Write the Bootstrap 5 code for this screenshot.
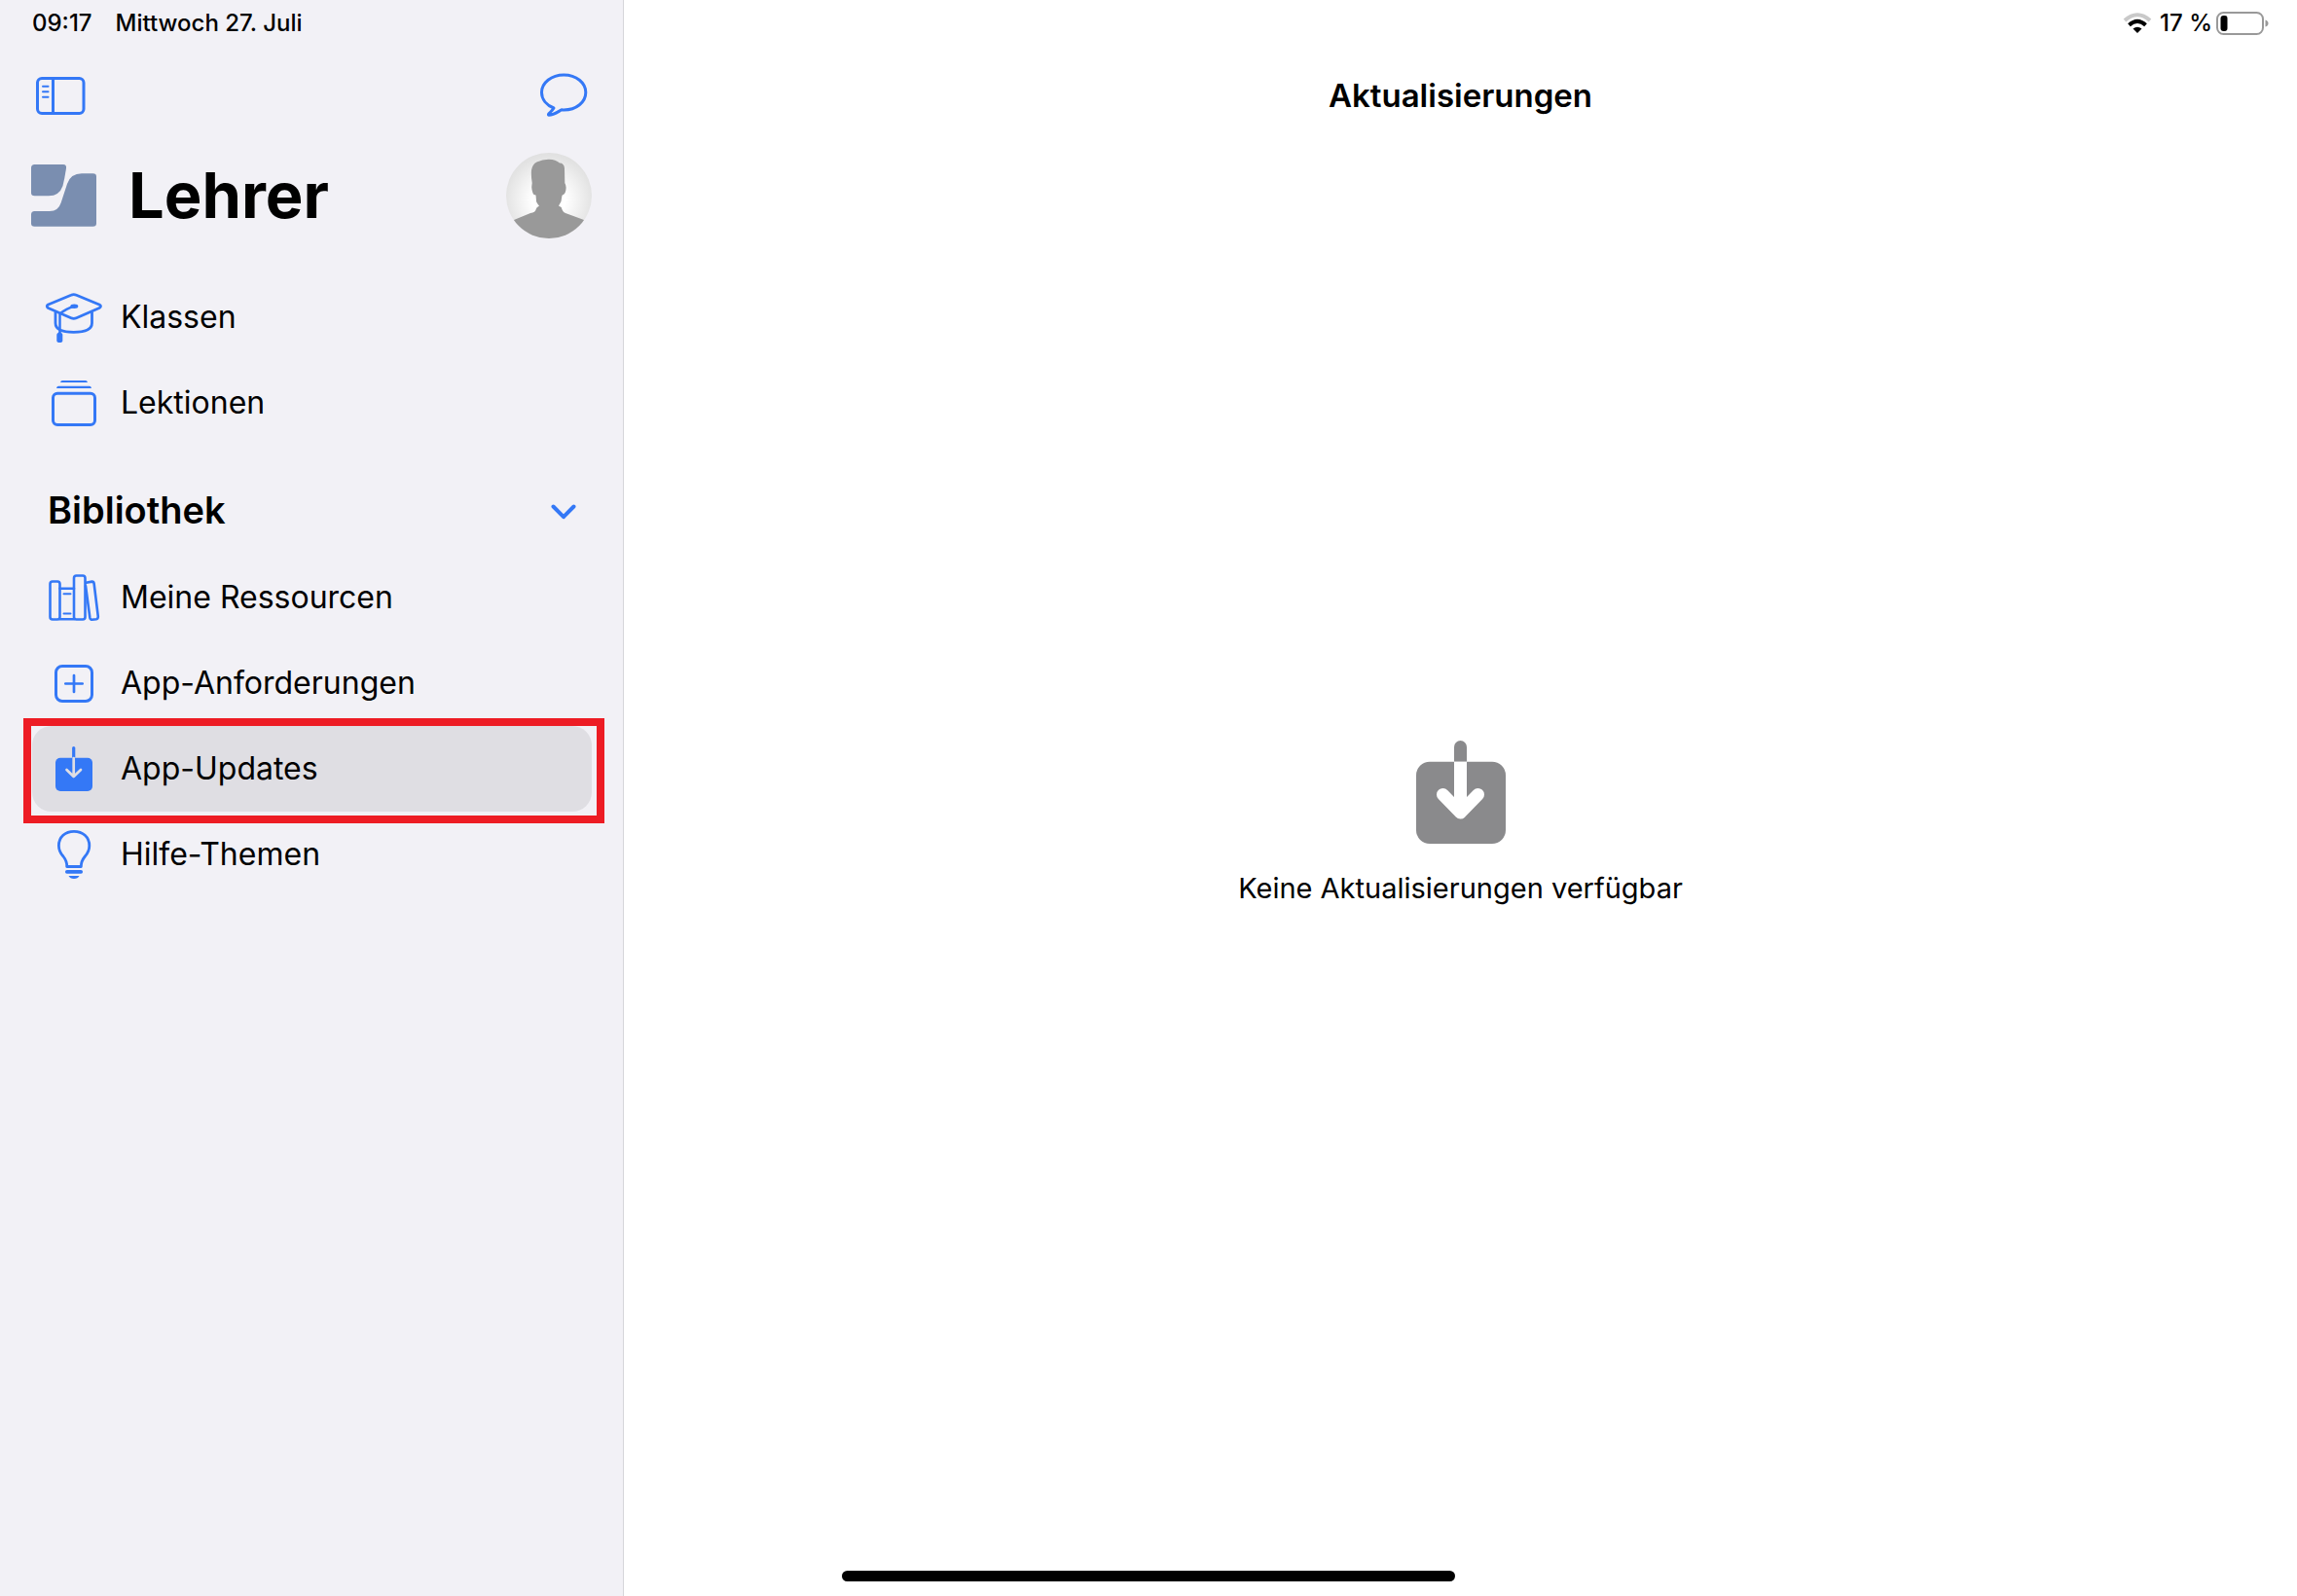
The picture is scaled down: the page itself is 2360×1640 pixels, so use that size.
<!DOCTYPE html>
<html lang="de">
<head>
<meta charset="utf-8">
<meta name="viewport" content="width=device-width, initial-scale=1">
<title>Lehrer – Aktualisierungen</title>
<link href="https://cdn.jsdelivr.net/npm/bootstrap@5.3.0/dist/css/bootstrap.min.css" rel="stylesheet">
<style>
  :root { --ios-blue: #3478f6; --side-bg: #f2f1f6; --row-on: #dfdee3; }
  body { font-family: Inter, "Liberation Sans", sans-serif; color: #000; background: #fff; }
  svg { display: block; flex: none; }
  .side-pane { flex: 0 0 641px; background: var(--side-bg); border-right: 1px solid #d6d6da; }
  .status-line { height: 48px; font-size: 24px; line-height: 48px; font-weight: 500; }
  .side-pane .status-line { padding: 0 33px; gap: 24px; }
  .main-pane .status-line { padding: 0 29px; gap: 4px; }
  .tool-line { height: 100px; }
  .side-pane .tool-line { padding: 0 35px 0 36px; }
  .icon-btn { border: 0; padding: 0; background: none; color: var(--ios-blue); }
  .brand-line { height: 106px; padding: 0 32px; gap: 32px; margin-bottom: 28px; }
  .brand-name { font-size: 65px; line-height: 80px; font-weight: 700; }
  .side-nav { padding: 0 32px 0 33px; }
  .side-link { height: 88px; padding-left: 13px; gap: 18px; font-size: 32px; line-height: 44px; color: #000; text-decoration: none; border-radius: 20px; }
  .side-link svg { color: var(--ios-blue); }
  .side-link.active { background: var(--row-on); }
  .section-head { height: 112px; padding: 20px 16px 0 16px; }
  .section-title { font-size: 38px; line-height: 48px; font-weight: 600; }
  .callout-frame { position: absolute; inset: -8px -13px -12px -9px; border: 8px solid #ed1c24; pointer-events: none; }
  .pane-title { font-size: 33px; line-height: 44px; font-weight: 600; }
  .empty-state { padding-bottom: 94px; gap: 26px; }
  .empty-text { font-size: 29px; line-height: 40px; }
  .home-bar { position: fixed; left: 50%; bottom: 15px; width: 630px; max-width: 60%; height: 11px; margin-left: -315px; border-radius: 6px; background: #000; }
</style>
</head>
<body>
<div class="d-flex min-vh-100">
  <aside class="side-pane">
    <div class="status-line d-flex">
      <span>09:17</span><span>Mittwoch 27. Juli</span>
    </div>
    <div class="tool-line d-flex align-items-center justify-content-between">
      <button type="button" class="icon-btn" aria-label="Seitenleiste">
        <svg width="52" height="40" viewBox="-1 -1 52 40" fill="none" stroke="currentColor" stroke-width="3" stroke-linecap="round">
          <rect x="1.5" y="1.5" width="47.5" height="36" rx="4.5"/><path d="M17.5 2v35" stroke-linecap="butt"/><path d="M7 9.7h5.500M7 15.2h5.500M7 20.7h5.500" stroke-width="2"/>
        </svg>
      </button>
      <button type="button" class="icon-btn" aria-label="Nachrichten">
        <svg width="50" height="46" viewBox="0 0 50 46" fill="none" stroke="currentColor" stroke-width="3" stroke-linejoin="round">
          <path d="M14 36C6.500 33 1.500 27 1.500 20 1.500 10 11.500 2 24.300 2s22.500 8 22.500 18-9.700 18-22.500 18q-1.300 0-2.300-.2C18 40 13.500 43.200 9 43.300q-1-.2-.3-1.300C10.500 40 12.500 38.500 14 36z"/>
        </svg>
      </button>
    </div>
    <div class="brand-line d-flex align-items-center">
      <svg width="68" height="64" viewBox="0 0 68 64" fill="#7a8eb0">
        <path d="M3.500 0H33q3.500 0 3 4Q34.500 14 32.500 22 29 32.300 18 32.300H3.500Q0 32.300 0 29V3.500Q0 0 3.500 0z"/>
        <path d="M52 9.300H63.500Q67 9.300 67 12.500V60.500Q67 63.700 63.500 63.700H3.500Q0 63.700 0 60.500V51.500Q0 48 3.500 48H19Q28 48 30.700 39.300L37 20Q40.500 9.300 52 9.300z"/>
      </svg>
      <h1 class="brand-name mb-0 me-auto">Lehrer</h1>
      <svg width="88" height="88" viewBox="0 0 88 88" role="img" aria-label="Profilbild">
        <defs>
          <radialGradient id="halo" cx=".5" cy=".55" r=".55"><stop offset=".35" stop-color="#fff"/><stop offset=".9" stop-color="#e4e4e4"/><stop offset="1" stop-color="#e0e0e0"/></radialGradient>
          <clipPath id="disc"><circle cx="44" cy="44" r="44"/></clipPath>
        </defs>
        <circle cx="44" cy="44" r="44" fill="url(#halo)"/>
        <path clip-path="url(#disc)" fill="#999" d="M4 71L8 69 25 62Q30 61 30.500 58.500 31 56 34 54.500 31 51 31 49.500L30.500 43.500Q28 43.500 27.500 41.500 26 37 26.300 34.500L26.700 31Q25.500 24 26 18 27 11.500 31.500 9.500 38 6.500 44 6.700 51 7 55 10.500 59.500 10.500 60 16L60.300 31Q62 34 61.500 37 61.500 42 57.500 43.700L56.500 50 54 54.500 56.700 56Q58 61 61 62L80 69 84 71V90H4z"/>
      </svg>
    </div>
    <nav class="side-nav">
      <a href="#" class="side-link d-flex align-items-center">
        <svg width="60" height="60" viewBox="0 0 60 60" fill="none" stroke="currentColor" stroke-width="2.8" stroke-linejoin="round">
          <path d="M27 7.200Q29.700 6 32.500 7.200L56 17Q59 18.700 56 20.500L32.500 30.800Q29.700 32 27 30.800L3.500 20.500Q1 18.700 3.500 17z"/>
          <path d="M11 24.500V36Q11 45.300 29.700 45.300T48.500 36V24.500"/>
          <path d="M30 18.700Q22 21 15.500 26.500V46" stroke-width="2.5"/>
          <ellipse cx="30.3" cy="18.7" rx="4" ry="2.2" fill="currentColor" stroke="none"/>
          <path d="M15.300 44.500q3 2 3 4V54q0 2-3 2t-3-2V48.500q0-2 3-4z" fill="currentColor" stroke="none"/>
        </svg>
        <span>Klassen</span>
      </a>
      <a href="#" class="side-link d-flex align-items-center">
        <svg width="60" height="60" viewBox="0 0 60 60" fill="none" stroke="currentColor" stroke-width="3">
          <rect x="8.5" y="20.3" width="43" height="32.2" rx="4.5"/>
          <path d="M16 9q.5-2 2-2H42q1.500 0 2 2zM12 15q.5-2.300 2-2.300H46q1.500 0 2 2.300z" fill="currentColor" stroke="none"/>
        </svg>
        <span>Lektionen</span>
      </a>
      <div class="section-head d-flex align-items-center justify-content-between">
        <h2 class="section-title mb-0">Bibliothek</h2>
        <button type="button" class="icon-btn" aria-label="Bibliothek einklappen">
          <svg width="26" height="20" viewBox="0 -4 26 20" fill="none" stroke="currentColor" stroke-width="4" stroke-linecap="round" stroke-linejoin="round"><path d="M2.500 2.500L13 13.200 23.500 2.500"/></svg>
        </button>
      </div>
      <a href="#" class="side-link d-flex align-items-center">
        <svg width="60" height="60" viewBox="0 0 60 60" fill="none" stroke="currentColor" stroke-width="2.6" stroke-linejoin="round" stroke-linecap="round">
          <rect x="5.5" y="13.5" width="10" height="39" rx="2.5"/>
          <path d="M15.500 20.700H30M15.500 52.300H30"/>
          <rect x="30" y="7.5" width="11.5" height="45" rx="2.5"/>
          <path d="M19.500 26.300H26.500M19.500 46.500H26.500" stroke-width="2"/>
          <path d="M42.500 14.700L48.500 13.600Q50.300 13.500 50.600 15.500L54.800 49.500Q54.800 51.800 53 52.200L48.700 52.800Q46.800 52.800 46.400 51L42 18"/>
        </svg>
        <span>Meine Ressourcen</span>
      </a>
      <a href="#" class="side-link d-flex align-items-center">
        <svg width="60" height="60" viewBox="0 0 60 60" fill="none" stroke="currentColor" stroke-width="3" stroke-linecap="round">
          <rect x="11.5" y="12.5" width="37" height="36" rx="6.5"/><path d="M30 22v17M21.300 30.500h17.400" stroke-width="2.7"/>
        </svg>
        <span>App-Anforderungen</span>
      </a>
      <div class="position-relative">
        <a href="#" class="side-link active d-flex align-items-center" aria-current="page">
          <svg width="60" height="60" viewBox="0 0 60 60" fill="none" stroke-linecap="round" stroke-linejoin="round" stroke-width="2.7">
            <rect x="11" y="18.7" width="38" height="34.3" rx="5" fill="currentColor"/>
            <path d="M29.700 8.500V18" stroke="currentColor" stroke-width="3.2"/>
            <path d="M29.700 19V38M22.500 31L29.700 38 37 31" stroke="#dfdee3"/>
          </svg>
          <span>App-Updates</span>
        </a>
        <div class="callout-frame"></div>
      </div>
      <a href="#" class="side-link d-flex align-items-center">
        <svg width="60" height="60" viewBox="0 0 60 60" fill="none" stroke="currentColor" stroke-width="2.8">
          <path d="M22.700 42.500Q23 37 19 32 14.400 27 14.400 21C14.400 12 21 6.400 30 6.400S45.800 12 45.800 21Q45.800 27 41.300 32 37.200 37 37.300 42.500z" stroke-linejoin="round"/>
          <path d="M22.800 47.800H37.200" stroke-width="3.7" stroke-linecap="round"/>
          <path d="M24.500 52H35.500Q34 55 30 55T24.500 52z" fill="currentColor" stroke="none"/>
        </svg>
        <span>Hilfe-Themen</span>
      </a>
    </nav>
  </aside>

  <main class="main-pane d-flex flex-column flex-grow-1">
    <div class="status-line d-flex align-items-center justify-content-end">
      <svg class="me-1" width="30" height="22" viewBox="0 0 30 22" fill="none" role="img" aria-label="WLAN">
        <path d="M2 8Q15-3.500 28 8" stroke="#c9c9c9" stroke-width="4"/>
        <path d="M6.500 12.800Q15 5 23.500 12.800" stroke="#000" stroke-width="4"/>
        <path d="M15 21L10.500 16.500Q15 12.800 19.500 16.500z" fill="#000"/>
      </svg>
      <span>17 %</span>
      <svg width="54" height="24" viewBox="0 0 54 24" fill="none" role="img" aria-label="Batterie">
        <rect x="1" y="1" width="47" height="22" rx="6.5" stroke="#999" stroke-width="2"/>
        <rect x="4.5" y="4" width="7" height="16" rx="3" fill="#000"/>
        <path d="M50.500 8.500Q53.500 9.500 53.500 12T50.500 15.500z" fill="#999"/>
      </svg>
    </div>
    <header class="tool-line d-flex align-items-center justify-content-center">
      <h2 class="pane-title mb-0">Aktualisierungen</h2>
    </header>
    <section class="empty-state flex-grow-1 d-flex flex-column align-items-center justify-content-center">
      <svg width="92" height="106" viewBox="0 0 92 106" fill="none" stroke-width="13" stroke-linecap="round" stroke-linejoin="round">
        <rect y="21.7" width="92" height="84.3" rx="14" fill="#8a8a8c"/>
        <path d="M39 21.700V6.500a6.500 6.500 0 0 1 13 0V21.700z" fill="#8a8a8c"/>
        <path d="M45.500 21.700V74" stroke="#fff" stroke-linecap="butt"/>
        <path d="M27.500 55.500L45.500 74 63.500 55.500" stroke="#fff"/>
      </svg>
      <p class="empty-text mb-0">Keine Aktualisierungen verfügbar</p>
    </section>
  </main>
</div>
<div class="home-bar"></div>
<script src="https://cdn.jsdelivr.net/npm/bootstrap@5.3.0/dist/js/bootstrap.bundle.min.js"></script>
</body>
</html>
